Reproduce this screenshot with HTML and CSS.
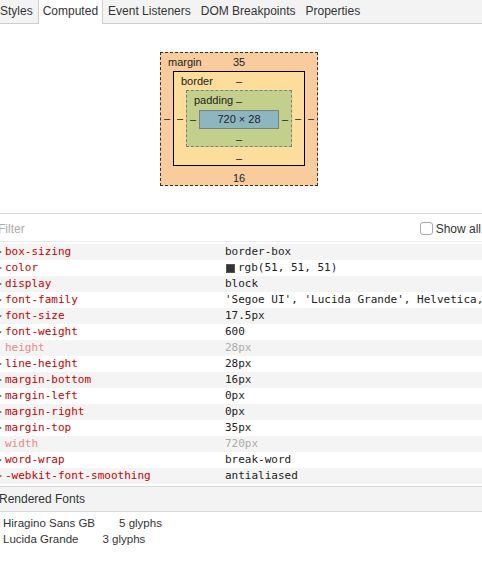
FILE: index.html
```html
<!DOCTYPE html>
<html>
<head>
<meta charset="utf-8">
<link rel="stylesheet" href="styles.css">
</head>
<body>
<div class="panel">
  <div class="tabs">
    <div class="tab">Styles</div>
    <div class="tab active">Computed</div>
    <div class="tab">Event Listeners</div>
    <div class="tab">DOM Breakpoints</div>
    <div class="tab">Properties</div>
  </div>

  <div class="boxmodel">
    <div class="bm bm-margin">
      <span class="bm-label">margin</span>
      <div class="bm-top">35</div>
      <div class="bm-side">–</div>
      <div class="bm bm-border">
        <span class="bm-label">border</span>
        <div class="bm-top">–</div>
        <div class="bm-side">–</div>
        <div class="bm bm-padding">
          <span class="bm-label">padding</span>
          <div class="bm-top">–</div>
          <div class="bm-side">–</div>
          <div class="bm-content">720 × 28</div>
          <div class="bm-side">–</div>
          <div class="bm-bottom">–</div>
        </div>
        <div class="bm-side">–</div>
        <div class="bm-bottom">–</div>
      </div>
      <div class="bm-side">–</div>
      <div class="bm-bottom">16</div>
    </div>
  </div>

  <div class="filter-bar">
    <span class="filter">Filter</span>
    <label class="show-all"><span class="checkbox"></span>Show all</label>
  </div>

  <div class="props">
    <div class="prop"><div class="name"><span class="tri"></span>box-sizing</div><div class="value">border-box</div></div>
    <div class="prop"><div class="name"><span class="tri"></span>color</div><div class="value"><span class="swatch"></span>rgb(51, 51, 51)</div></div>
    <div class="prop"><div class="name"><span class="tri"></span>display</div><div class="value">block</div></div>
    <div class="prop"><div class="name"><span class="tri"></span>font-family</div><div class="value">'Segoe UI', 'Lucida Grande', Helvetica, Arial, 'Microsoft YaHei', FreeSans, sans-serif</div></div>
    <div class="prop"><div class="name"><span class="tri"></span>font-size</div><div class="value">17.5px</div></div>
    <div class="prop"><div class="name"><span class="tri"></span>font-weight</div><div class="value">600</div></div>
    <div class="prop inherited"><div class="name"><span class="tri none"></span>height</div><div class="value">28px</div></div>
    <div class="prop"><div class="name"><span class="tri"></span>line-height</div><div class="value">28px</div></div>
    <div class="prop"><div class="name"><span class="tri"></span>margin-bottom</div><div class="value">16px</div></div>
    <div class="prop"><div class="name"><span class="tri"></span>margin-left</div><div class="value">0px</div></div>
    <div class="prop"><div class="name"><span class="tri"></span>margin-right</div><div class="value">0px</div></div>
    <div class="prop"><div class="name"><span class="tri"></span>margin-top</div><div class="value">35px</div></div>
    <div class="prop inherited"><div class="name"><span class="tri none"></span>width</div><div class="value">720px</div></div>
    <div class="prop"><div class="name"><span class="tri"></span>word-wrap</div><div class="value">break-word</div></div>
    <div class="prop"><div class="name"><span class="tri"></span>-webkit-font-smoothing</div><div class="value">antialiased</div></div>
  </div>

  <div class="fonts-header">Rendered Fonts</div>
  <div class="fonts">
    <div class="font-row"><span>Hiragino Sans GB</span><span class="glyphs">5 glyphs</span></div>
    <div class="font-row"><span>Lucida Grande</span><span class="glyphs">3 glyphs</span></div>
  </div>
</div>
</body>
</html>
```

FILE: styles.css
```css
html, body {
  margin: 0;
  padding: 0;
  background: #fff;
  overflow: hidden;
}

body {
  font-family: "Liberation Sans", Arial, sans-serif;
  font-size: 12px;
  color: #333;
}

.panel {
  margin-left: -4px;
  width: 486px;
}

/* Tabs */
.tabs {
  display: flex;
  height: 23px;
  background: #f3f3f3;
  border-bottom: 1px solid #cdcdcd;
}

.tab {
  padding: 0 4px;
  border-left: 1px solid transparent;
  border-right: 1px solid transparent;
  line-height: 23px;
  color: #333;
  white-space: nowrap;
}

.tab:first-child {
  margin-left: -1px;
}

.tab.active {
  background: #fff;
  border-left-color: #cdcdcd;
  border-right-color: #cdcdcd;
  height: 24px;
}

/* Box model */
.boxmodel {
  display: flex;
  justify-content: center;
  padding: 28px 0 27px;
  font-size: 11px;
  color: #222;
}

.bm {
  position: relative;
  display: grid;
  grid-template-columns: 12px auto 12px;
  box-sizing: border-box;
}

.bm-margin {
  width: 158px;
  grid-template-rows: 18px auto 19px;
  background: #f9cc9d;
  border: 1px dashed #333;
}

.bm-border {
  grid-template-rows: 18px auto 18px;
  background: #fddd9b;
  border: 1px solid #000;
}

.bm-padding {
  grid-template-rows: 19px auto 17px;
  background: #c3d08b;
  border: 1px dashed #808080;
}

.bm-label {
  position: absolute;
  left: 7px;
  top: 3px;
  line-height: 13px;
}

.bm-top,
.bm-bottom {
  grid-column: 1 / -1;
  text-align: center;
  line-height: 13px;
}

.bm-top {
  align-self: center;
  padding-top: 1px;
}

.bm-bottom {
  align-self: end;
}

.bm-side {
  align-self: center;
  text-align: center;
  line-height: 13px;
}

.bm-content {
  width: 80px;
  height: 19px;
  box-sizing: border-box;
  background: #8cb6c0;
  border: 1px solid #808080;
  text-align: center;
  line-height: 17px;
}

/* Filter */
.filter-bar {
  display: flex;
  align-items: center;
  justify-content: space-between;
  height: 27px;
  border-top: 1px solid #dadada;
  border-bottom: 1px solid #eaeaea;
  padding-left: 2px;
}

.filter {
  color: #aaa;
  padding-top: 2px;
}

.show-all {
  display: flex;
  align-items: center;
  color: #333;
  font-size: 12px;
  padding-right: 1px;
  padding-top: 2px;
}

.checkbox {
  width: 11px;
  height: 11px;
  border: 1px solid #aaa;
  border-radius: 3px;
  background: #fff;
  margin-right: 3px;
}

/* Properties */
.props {
  padding-top: 2px;
  font-family: "DejaVu Sans Mono", "Liberation Mono", monospace;
  font-size: 11px;
}

.prop {
  display: grid;
  grid-template-columns: 229px 1fr;
  height: 16px;
  line-height: 16px;
}

.prop:nth-child(odd) {
  background: #f4f4f4;
}

.name {
  display: flex;
  align-items: center;
  color: #c80000;
  padding-left: 1px;
  white-space: nowrap;
}

.tri {
  width: 0;
  height: 0;
  border-left: 5px solid #727272;
  border-top: 3px solid transparent;
  border-bottom: 3px solid transparent;
  margin-right: 3px;
}

.tri.none {
  border-left-color: transparent;
}

.value {
  color: #222;
  white-space: nowrap;
  overflow: hidden;
  display: flex;
  align-items: center;
}

.inherited .name {
  color: #e38a8a;
}

.inherited .value {
  color: #aaa;
}

.swatch {
  width: 9px;
  height: 9px;
  background: #333;
  border: 1px solid #555;
  box-sizing: border-box;
  margin-right: 3px;
  margin-left: 1px;
}

/* Rendered fonts */
.fonts-header {
  margin-top: 2px;
  height: 24px;
  line-height: 24px;
  background: #f3f3f3;
  border-top: 1px solid #dadada;
  border-bottom: 1px solid #dadada;
  padding-left: 3px;
  color: #333;
}

.fonts {
  padding: 3px 0 0 7px;
  line-height: 16px;
  font-size: 11.5px;
  color: #333;
}

.glyphs {
  margin-left: 24px;
}
```
